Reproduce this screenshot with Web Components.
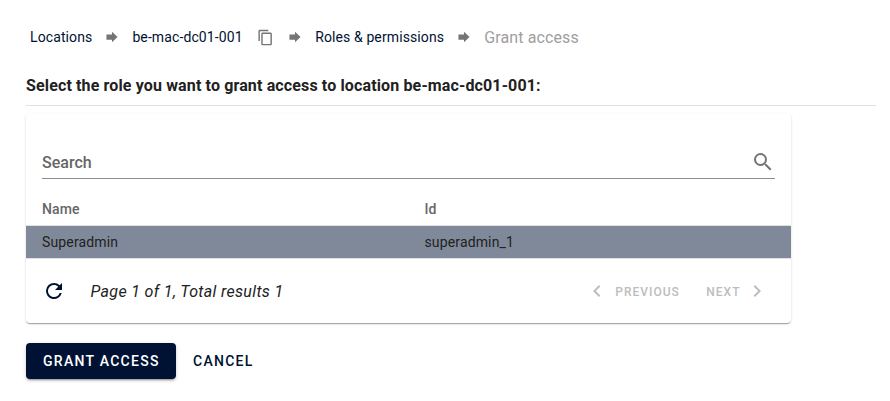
<!DOCTYPE html>
<html lang="en">
<head>
<meta charset="utf-8">
<title>Grant access</title>
<style>
body{margin:0;background:#fff;font-family:Roboto,"Liberation Sans",sans-serif;color:rgba(0,0,0,.87)}
</style>
</head>
<body>
<grant-page></grant-page>
<script>
const define = (name, html) => customElements.define(name, class extends HTMLElement {
  constructor() {
    super();
    const t = document.createElement('template');
    t.innerHTML = html;
    this.attachShadow({mode: 'open'}).append(t.content.cloneNode(true));
  }
});

const icons = {
  arrow: '<path d="M2.500 7.500h9.500V3l9.500 9-9.500 9v-4.500H2.500z"/>',
  copy: '<path d="M16 1H4c-1.100 0-2 .9-2 2v14h2V3h12V1zm3 4H8c-1.100 0-2 .9-2 2v14c0 1.100.9 2 2 2h11c1.100 0 2-.9 2-2V7c0-1.100-.9-2-2-2zm0 16H8V7h11v14z"/>',
  search: '<path d="M15.500 14h-.79l-.28-.27A6.471 6.471 0 0 0 16 9.500 6.500 6.500 0 1 0 9.500 16c1.610 0 3.090-.59 4.230-1.570l.27.28v.79l5 4.990L20.490 19l-4.990-5zm-6 0C7.010 14 5 11.990 5 9.500S7.010 5 9.500 5 14 7.010 14 9.500 11.990 14 9.500 14z"/>',
  refresh: '<path d="M17.650 6.350A7.958 7.958 0 0 0 12 4a8 8 0 1 0 7.730 10h-2.080A5.990 5.990 0 0 1 12 18c-3.310 0-6-2.690-6-6s2.690-6 6-6c1.660 0 3.140.69 4.220 1.780L13 11h7V4l-2.350 2.350z"/>',
  left: '<path d="M15.410 7.410L14 6l-6 6 6 6 1.410-1.410L10.830 12z"/>',
  right: '<path d="M10 6L8.590 7.410 13.170 12l-4.580 4.590L10 18l6-6z"/>'
};
customElements.define('ui-icon', class extends HTMLElement {
  constructor() { super(); this.attachShadow({mode: 'open'}); }
  connectedCallback() {
    this.shadowRoot.innerHTML = `<style>
      :host{display:block;flex:none;width:24px;height:24px}
      svg{display:block;width:100%;height:100%;fill:currentColor}
    </style><svg viewBox="0 0 24 24">${icons[this.getAttribute('name')]}</svg>`;
  }
});

define('crumb-bar', `<style>
  :host{display:flex;align-items:center;height:24px;padding-left:4px}
</style><slot></slot>`);
define('crumb-item', `<style>
  :host{display:block;white-space:nowrap;font-size:14px;line-height:24px;letter-spacing:.11px;color:#001233}
  :host([current]){font-size:16px;letter-spacing:.13px;padding-top:2px;color:#9e9e9e}
</style><slot></slot>`);

define('page-heading', `<style>
  :host{display:block;font-size:16px;font-weight:700;line-height:24px;letter-spacing:.135px;padding-bottom:7px;border-bottom:1px solid #e0e0e0;color:#212121}
</style><slot></slot>`);

define('search-field', `<style>
  :host{display:flex;align-items:center;justify-content:space-between;height:32px;border-bottom:1px solid #8e8e8e;
    font-size:16px;font-weight:500;letter-spacing:.02px;color:#666}
  ui-icon{color:#757575}
</style><slot></slot><ui-icon name="search"></ui-icon>`);

define('table-row', `<style>
  :host{display:grid;grid-template-columns:1fr 1fr;align-items:center;height:32px;font-size:14px;
    letter-spacing:.14px;border-bottom:1px solid #e0e0e0;color:#212121}
  ::slotted(span){padding-left:16px}
  :host([head]){font-weight:500;color:#666}
  :host([selected]){background:#808999;background-clip:padding-box}
</style><slot></slot>`);

define('page-bar', `<style>
  :host{display:flex;align-items:center;height:64px;padding:0 22px 0 16px}
  .refresh{color:#001233}
  .status{font-size:16px;font-style:italic;letter-spacing:.35px;margin-left:24.500px;color:#212121}
  .nav{display:flex;align-items:center;margin-left:auto;font-size:12px;font-weight:500;letter-spacing:1px;color:#bdbdbd}
  .nav span{padding-top:1px}
  .prev{margin-left:6px;margin-right:26.500px}
  .next{margin-right:4.500px}
</style>
<ui-icon class="refresh" name="refresh"></ui-icon><span class="status"><slot></slot></span>
<div class="nav"><ui-icon name="left"></ui-icon><span class="prev">PREVIOUS</span><span class="next">NEXT</span><ui-icon name="right"></ui-icon></div>`);

define('role-card', `<style>
  :host{display:block;width:765px;height:209px;border-radius:4px;background:#fff;
    box-shadow:0 2px 1px -1px rgba(0,0,0,.2),0 1px 1px rgba(0,0,0,.14),0 1px 3px rgba(0,0,0,.12)}
  .search{padding:32px 16px 14px}
</style><div class="search"><slot name="search"></slot></div><slot></slot>`);

define('action-button', `<style>
  :host{display:flex;align-items:center;height:36px;padding:0 16px 0 17px;border-radius:4px;font-size:14px;font-weight:500;
    letter-spacing:1.280px;white-space:nowrap;color:#001233}
  :host([primary]){box-sizing:border-box;width:150px;background:#001233;color:#fff;
    box-shadow:0 3px 1px -2px rgba(0,0,0,.2),0 2px 2px rgba(0,0,0,.14),0 1px 5px rgba(0,0,0,.12)}
</style><slot></slot>`);

define('grant-page', `<style>
  :host{display:block;box-sizing:border-box;width:890px;height:401px;padding:25px 14px 0 26px}
  page-heading{margin:25px 0 8px}
  .arrow{width:14px;height:14px;margin:0 13px;color:#757575}
  .copy{width:17px;height:17px;margin:0 1.200px 0 14.300px;color:#757575}
  .actions{display:flex;margin-top:20px}
</style>
<crumb-bar>
  <crumb-item>Locations</crumb-item><ui-icon class="arrow" name="arrow"></ui-icon>
  <crumb-item>be-mac-dc01-001</crumb-item><ui-icon class="copy" name="copy"></ui-icon><ui-icon class="arrow" name="arrow"></ui-icon>
  <crumb-item>Roles &amp; permissions</crumb-item><ui-icon class="arrow" name="arrow"></ui-icon>
  <crumb-item current>Grant access</crumb-item>
</crumb-bar>
<page-heading>Select the role you want to grant access to location be-mac-dc01-001:</page-heading>
<role-card>
  <search-field slot="search">Search</search-field>
  <table-row head><span>Name</span><span>Id</span></table-row>
  <table-row selected><span>Superadmin</span><span>superadmin_1</span></table-row>
  <page-bar>Page 1 of 1, Total results 1</page-bar>
</role-card>
<div class="actions"><action-button primary>GRANT ACCESS</action-button><action-button>CANCEL</action-button></div>`);
</script>
</body>
</html>
